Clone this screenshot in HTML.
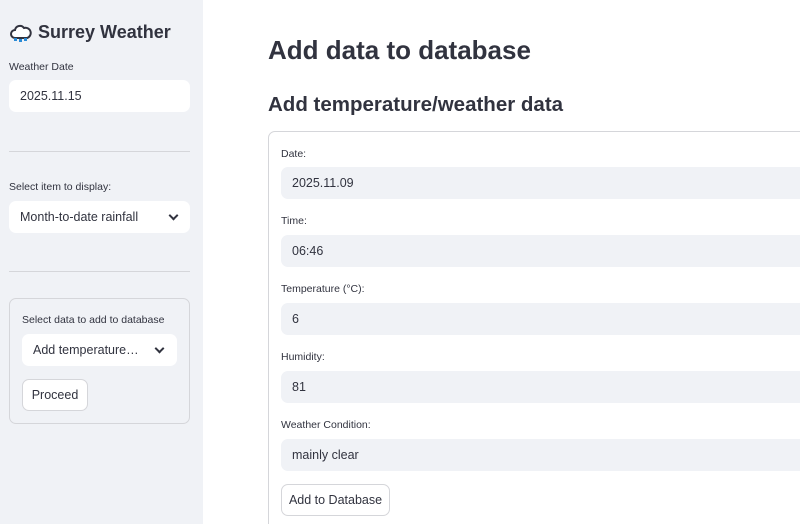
<!DOCTYPE html><html style="width:800px;height:524px;overflow:hidden"><head><style>
*{box-sizing:border-box;margin:0;padding:0}
body{width:800px;height:524px;overflow:hidden;font-family:"Liberation Sans",sans-serif;color:#31333f;background:#fff;position:relative}
.sb{position:absolute;left:0;top:0;width:203px;height:524px;background:#f0f2f6}
.a{position:absolute}
.lbl{font-size:10.5px;color:#31333f}
.inp{position:absolute;border-radius:7px;font-size:12.5px;padding-left:11px;display:flex;align-items:center}
.w{background:#fff}
.g{background:#f0f2f6}
.btn{position:absolute;border:1px solid #d5d6da;border-radius:7px;background:#fff;font-size:12.5px;display:flex;align-items:center;justify-content:center}
hr{position:absolute;border:none;border-top:1px solid #d5d6da;height:0}
.chev{position:absolute;width:7px;height:7px;border-right:2px solid #31333f;border-bottom:2px solid #31333f;transform:rotate(45deg)}
</style></head><body>
<div class="sb">
<svg class="a" style="left:10px;top:24px" width="22" height="20" viewBox="0 0 22 20"><path d="M5 14a4 4 0 0 1 0-8 5 5 0 0 1 9-2 4 4 0 0 1 3 10z" fill="#fff" stroke="#31333f" stroke-width="2"/><rect x="4" y="14" width="3" height="3" fill="#2a8bd6"/><rect x="9" y="15" width="3" height="3" fill="#2a8bd6"/><rect x="14" y="14" width="3" height="3" fill="#2a8bd6"/></svg>
<div class="a" style="left:38px;top:22px;font-size:18px;font-weight:bold">Surrey Weather</div>
<div class="a lbl" style="left:9px;top:61px">Weather Date</div>
<div class="inp w" style="left:9px;top:80px;width:181px;height:32px">2025.11.15</div>
<hr style="left:9px;top:151px;width:181px">
<div class="a lbl" style="left:9px;top:181px">Select item to display:</div>
<div class="inp w" style="left:9px;top:201px;width:181px;height:32px">Month-to-date rainfall</div>
<div class="chev" style="left:170px;top:212px"></div>
<hr style="left:9px;top:271px;width:181px">
<div class="a" style="left:9px;top:298px;width:181px;height:126px;border:1px solid #d5d6da;border-radius:7px"></div>
<div class="a lbl" style="left:22px;top:314px">Select data to add to database</div>
<div class="inp w" style="left:22px;top:334px;width:155px;height:32px">Add temperature…</div>
<div class="chev" style="left:156px;top:345px"></div>
<div class="btn" style="left:22px;top:379px;width:66px;height:32px">Proceed</div>
</div>
<div class="a" style="left:268px;top:35px;font-size:26px;font-weight:bold">Add data to database</div>
<div class="a" style="left:268px;top:93px;font-size:20.5px;font-weight:bold">Add temperature/weather data</div>
<div class="a" style="left:268px;top:131px;width:560px;height:400px;border:1px solid #d5d6da;border-radius:7px"></div>
<div class="a lbl" style="left:281px;top:148px">Date:</div>
<div class="inp g" style="left:281px;top:167px;width:540px;height:32px">2025.11.09</div>
<div class="a lbl" style="left:281px;top:215px">Time:</div>
<div class="inp g" style="left:281px;top:235px;width:540px;height:32px">06:46</div>
<div class="a lbl" style="left:281px;top:283px">Temperature (°C):</div>
<div class="inp g" style="left:281px;top:303px;width:540px;height:32px">6</div>
<div class="a lbl" style="left:281px;top:351px">Humidity:</div>
<div class="inp g" style="left:281px;top:371px;width:540px;height:32px">81</div>
<div class="a lbl" style="left:281px;top:419px">Weather Condition:</div>
<div class="inp g" style="left:281px;top:439px;width:540px;height:32px">mainly clear</div>
<div class="btn" style="left:281px;top:484px;width:109px;height:32px">Add to Database</div>
</body></html>
